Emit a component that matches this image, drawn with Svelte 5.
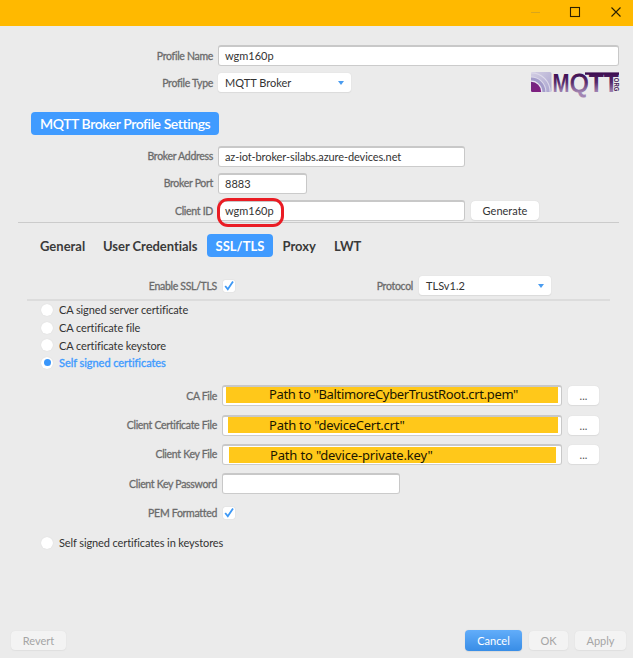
<script>
  const files = [
    { label: 'CA File', path: 'Path to "BaltimoreCyberTrustRoot.crt.pem"', cls: 'f1' },
    { label: 'Client Certificate File', path: 'Path to "deviceCert.crt"', cls: 'f2' },
    { label: 'Client Key File', path: 'Path to "device-private.key"', cls: 'f3' }
  ];
  const radios = ['CA signed server certificate', 'CA certificate file', 'CA certificate keystore', 'Self signed certificates'];
</script>

{#snippet check()}
  <span class="check"><svg width="12" height="12" viewBox="0 0 12 12"><path d="M2.2 6 L4.8 9.2 L10 1.6" fill="none" stroke="#3d98f5" stroke-width="1.8" /></svg></span>
{/snippet}

<div class="window">
  <header>
    <svg width="100" height="26" viewBox="0 0 100 26" fill="none">
      <path d="M0 12.5h9" stroke="#d9a51c" />
      <rect x="39.5" y="7.5" width="9" height="9" stroke="#2b2000" stroke-width="1.1" />
      <path d="M80.5 7.5l9 9m0-9l-9 9" stroke="#2b2000" stroke-width="1.1" />
    </svg>
  </header>

  <div class="row r1"><label><span>Profile Name</span></label><div class="input">wgm160p</div></div>
  <div class="row r2">
    <label><span>Profile Type</span></label>
    <div class="select"><span>MQTT Broker</span><i></i></div>
    <svg class="logo" width="92" height="38" viewBox="0 -7 92 38">
      <defs>
        <linearGradient id="ink" gradientUnits="userSpaceOnUse" x1="0" y1="2" x2="0" y2="21">
          <stop offset="0" stop-color="#3c0c50" /><stop offset=".5" stop-color="#572b6b" /><stop offset="1" stop-color="#a184b2" />
        </linearGradient>
        <linearGradient id="wave" x1="0" y1="0" x2="1" y2="1">
          <stop offset="0" stop-color="#d3cfe3" /><stop offset="1" stop-color="#aaa4cf" />
        </linearGradient>
        <linearGradient id="core" x1="0" y1="0" x2="1" y2="1">
          <stop offset="0" stop-color="#6a2a80" /><stop offset="1" stop-color="#8a1a80" />
        </linearGradient>
        <clipPath id="tile"><rect x="0" y="1" width="20.5" height="20" rx="1.5" /></clipPath>
      </defs>
      <g clip-path="url(#tile)">
        <rect y="1" width="21" height="20" fill="url(#wave)" />
        <circle cx="0" cy="21" r="19.2" fill="none" stroke="#dcd9ea" stroke-width="1.2" />
        <circle cx="0" cy="21" r="15.4" fill="#dcd9ea" />
        <circle cx="0" cy="21" r="14.4" fill="#a39cca" />
        <circle cx="0" cy="21" r="11.4" fill="#e9e7f1" />
        <circle cx="0" cy="21" r="10.2" fill="url(#core)" />
      </g>
      <g fill="url(#ink)" font-family="Liberation Sans, sans-serif" font-weight="bold">
        <text x="21.5" y="20.5" font-size="26" textLength="17" lengthAdjust="spacingAndGlyphs">M</text>
        <text x="39" y="20.5" font-size="25" textLength="18.5" lengthAdjust="spacingAndGlyphs" font-weight="normal" stroke="url(#ink)" stroke-width="1">Q</text>
        <text x="57.8" y="20.5" font-size="26" textLength="30" lengthAdjust="spacingAndGlyphs">TT</text>
        <rect x="54" y="1.4" width="34" height="2.4" />
        <text transform="translate(83.3 6.8) rotate(90)" font-size="6.5" textLength="13.5" lengthAdjust="spacingAndGlyphs" fill="#482159">ORG</text>
      </g>
    </svg>
  </div>

  <h2>MQTT Broker Profile Settings</h2>

  <div class="row r3"><label><span>Broker Address</span></label><div class="input mid addr">az-iot-broker-silabs.azure-devices.net</div></div>
  <div class="row r4"><label><span>Broker Port</span></label><div class="input port">8883</div></div>
  <div class="row r5">
    <label><span>Client ID</span></label>
    <div class="input mid">wgm160p<b class="ring"></b></div>
    <button class="gen">Generate</button>
  </div>
  <hr class="h1" />

  <nav>
    <span class="t1">General</span><span class="t2">User Credentials</span><span class="t3">SSL/TLS</span><span class="t4">Proxy</span><span class="t5">LWT</span>
  </nav>

  <div class="row wide r6">
    <label><span>Enable SSL/TLS</span></label>{@render check()}
    <label class="proto"><span>Protocol</span></label>
    <div class="select tls"><span>TLSv1.2</span><i></i></div>
  </div>
  <hr class="h2" />

  <div class="radios">
    {#each radios as text, i}
      <div class="radio" class:on={i === 3}><i></i><span>{text}</span></div>
    {/each}
  </div>

  <div class="files">
    {#each files as f}
      <div class="row wide">
        <label><span>{f.label}</span></label>
        <div class="input file"><div class="mark {f.cls}"><span>{f.path}</span></div></div>
        <button class="dots">...</button>
      </div>
    {/each}
    <div class="row wide"><label><span>Client Key Password</span></label><div class="input pass"></div></div>
    <div class="row wide"><label><span>PEM Formatted</span></label>{@render check()}</div>
  </div>

  <div class="radio last"><i></i><span>Self signed certificates in keystores</span></div>

  <footer>
    <button class="off revert">Revert</button>
    <button class="cancel">Cancel</button>
    <button class="off ok">OK</button>
    <button class="off apply">Apply</button>
  </footer>
</div>

<style>
  :global(body) { margin: 0; background: #ebebeb; }
  .window { width: 633px; height: 658px; overflow: hidden; background: #ebebeb; display: flex; flex-direction: column; font: 11px Lato, sans-serif; color: #333; white-space: nowrap; }
  header { height: 26px; flex: none; background: #ffb900; display: flex; justify-content: flex-end; }
  header svg { margin-right: 2px; }
  .row { display: flex; align-items: center; height: 21px; flex: none; }
  label { width: 213px; margin-right: 5px; text-align: right; color: #6b6b6b; font-size: 10.5px; letter-spacing: -.3px; -webkit-text-stroke: .3px #6b6b6b; }
  .wide label { width: 217px; }
  .input { box-sizing: border-box; width: 401px; height: 21px; border: 1px solid #c8c8c8; border-top: 2px solid #c8c8c8; border-bottom-color: #cbcbcb; border-radius: 3px; background: #fff; padding-left: 6px; line-height: 17px; position: relative; }
  .mid { width: 247px; }
  .addr { letter-spacing: -.1px; }
  .port { width: 89px; }
  .select { box-sizing: border-box; width: 133px; height: 19px; border-radius: 3px; background: #fff; box-shadow: 0 0 1px #ccc, 0 1px 1px #ddd; padding: 0 7px; display: flex; align-items: center; justify-content: space-between; }
  .select i { border: 3.5px solid transparent; border-top: 4px solid #4a9cf0; border-bottom: 0; }
  .r1 { margin-top: 19px; }
  .r2 { margin-top: 6px; }
  .logo { margin-left: 180px; flex: none; }
  h2 { margin: 19px 0 0 31px; width: 188px; height: 23px; border-radius: 4px; background: #409bff; color: #fff; font: 600 14px/24px Lato, sans-serif; text-indent: 9px; letter-spacing: -.43px; }
  .r3 { margin-top: 10.5px; }
  .r4 { margin-top: 6px; }
  .r5 { margin-top: 6.5px; }
  button { box-sizing: border-box; padding: 0; border: 0; border-radius: 4px; height: 19px; background: #fff; box-shadow: 0 0 1px #ccc, 0 1px 1px #ddd; font: 11px Lato, sans-serif; color: #333; text-align: center; }
  .gen { width: 68px; margin-left: 6px; }
  .ring { position: absolute; left: -2px; top: -4px; width: 61px; height: 23px; border: 3px solid #ea1c24; border-radius: 11px; }
  hr { margin: 0; border: 0; flex: none; }
  .h1 { height: 1px; background: #cbcbcb; margin: 1px 14px 0 18px; }
  .h2 { height: 2px; background: #dcdcdc; margin: 3px 23px 0 27px; }
  nav { display: flex; margin: 11px 0 0 40px; height: 23px; font: bold 13px/24px Lato, sans-serif; color: #3a3a3a; flex: none; }
  .t1 { width: 63px; }
  .t2 { width: 104px; letter-spacing: -.05px; }
  .t3 { width: 66px; text-align: center; background: #409bff; color: #fff; border-radius: 4px; margin-right: 9.5px; }
  .t4 { width: 51.5px; }
  .r6 { margin-top: 18px; }
  .check { width: 12px; height: 12px; margin-left: 1px; background: #fff; border-radius: 2px; box-shadow: 0 0 1px #bbb; display: flex; }
  .wide label.proto { width: 178px; margin-right: 6px; }
  .tls { width: 132px; }
  .radios { flex: none; }
  .radio { display: flex; align-items: center; height: 17.7px; margin-left: 41px; flex: none; letter-spacing: -.11px; }
  .radio i { box-sizing: border-box; width: 12px; height: 12px; border-radius: 50%; background: #fff; box-shadow: 0 0 1px #ccc; margin-right: 6px; display: grid; place-items: center; }
  .on span { color: #409bff; letter-spacing: -.05px; -webkit-text-stroke: .35px #409bff; }
  .on i::after { content: ''; width: 7px; height: 7px; border-radius: 50%; background: #3896fb; }
  .files { margin-top: 13.5px; display: flex; flex-direction: column; gap: 8.3px; flex: none; }
  .file { width: 340px; padding: 0; }
  .mark { position: absolute; top: 0; height: 16px; background: #ffc81a; color: #1b1600; font: 13px/15px "Noto Sans", sans-serif; letter-spacing: -.34px; }
  .f1 { left: 3px; width: 332px; text-indent: 43px; }
  .f2 { left: 5px; width: 330px; text-indent: 41px; line-height: 17px; letter-spacing: -.24px; }
  .f3 { left: 6px; width: 327px; text-indent: 41px; line-height: 17px; top: 1px; letter-spacing: -.16px; }
  .dots { width: 31px; margin-left: 6px; color: #555; }
  .pass { width: 178px; }
  .last { margin-top: 10.5px; }
  footer { margin-top: auto; padding: 0 7px 7px 11px; display: flex; align-items: center; gap: 7px; }
  .off { background: #f3f3f3; color: #a5a5a5; box-shadow: 0 0 1px #d8d8d8, 0 1px 1px #e2e2e2; }
  .revert { width: 55px; margin-right: auto; }
  .cancel { width: 57px; height: 21px; background: linear-gradient(#62adfa, #388de6); color: #fff; }
  .ok { width: 39px; }
  .apply { width: 51px; }
</style>
